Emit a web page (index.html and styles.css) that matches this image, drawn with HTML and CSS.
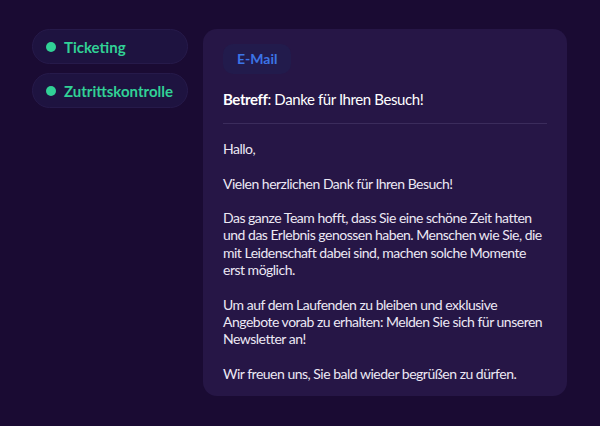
FILE: index.html
```html
<!DOCTYPE html>
<html lang="de">
<head>
<meta charset="utf-8">
<link rel="stylesheet" href="styles.css">
</head>
<body>
<div class="layout">
  <nav class="sidebar">
    <div class="pill"><span class="dot"></span>Ticketing</div>
    <div class="pill"><span class="dot"></span>Zutrittskontrolle</div>
  </nav>
  <section class="card">
    <div class="badge">E-Mail</div>
    <div class="subject"><strong>Betreff</strong>: Danke für Ihren Besuch!</div>
    <hr class="divider">
    <div class="body">
      <p>Hallo,</p>
      <p>Vielen herzlichen Dank für Ihren Besuch!</p>
      <p>Das ganze Team hofft, dass Sie eine schöne Zeit hatten und das Erlebnis genossen haben. Menschen wie Sie, die mit Leidenschaft dabei sind, machen solche Momente erst möglich.</p>
      <p>Um auf dem Laufenden zu bleiben und exklusive Angebote vorab zu erhalten: Melden Sie sich für unseren Newsletter an!</p>
      <p>Wir freuen uns, Sie bald wieder begrüßen zu dürfen.</p>
    </div>
  </section>
</div>
</body>
</html>
```

FILE: styles.css
```css
html, body {
  margin: 0;
  padding: 0;
  background: #1a0b33;
  font-family: "Lato", "Noto Sans", sans-serif;
}
.layout {
  display: flex;
  align-items: flex-start;
  gap: 15px;
  padding: 29px 32px;
}
.sidebar {
  width: 156px;
  display: flex;
  flex-direction: column;
  gap: 9px;
}
.pill {
  height: 35px;
  box-sizing: border-box;
  display: flex;
  align-items: center;
  gap: 8px;
  padding-left: 13px;
  border-radius: 18px;
  background: #1e1340;
  border: 1px solid #261a4a;
  color: #31d196;
  font-weight: 700;
  font-size: 15px;
}
.dot {
  width: 10px;
  height: 10px;
  border-radius: 50%;
  background: #31d196;
}
.card {
  width: 364px;
  height: 367px;
  box-sizing: border-box;
  background: #261646;
  border-radius: 14px;
  padding: 15px 20px 0 20px;
  color: #ece8f4;
}
.badge {
  display: inline-block;
  height: 30px;
  line-height: 30px;
  padding: 0 14px;
  border-radius: 10px;
  background: #221b4c;
  color: #3c74e6;
  font-weight: 700;
  font-size: 14px;
}
.subject {
  margin-top: 16px;
  font-size: 15px;
  letter-spacing: -0.4px;
  color: #ffffff;
}
.subject strong { font-weight: 700; }
.divider {
  border: 0;
  height: 1px;
  background: #3b2c5c;
  margin: 15px 0 0 0;
}
.body {
  margin-top: 16px;
  font-size: 14px;
  line-height: 17.3px;
  letter-spacing: -0.5px;
}
.body p {
  margin: 0 0 17.3px 0;
}
```
